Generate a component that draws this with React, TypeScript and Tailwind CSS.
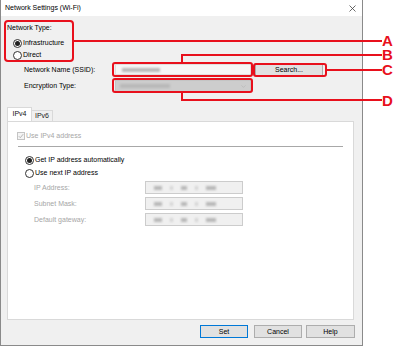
import { ChevronDown } from "lucide-react";

const font = { fontFamily: '"Liberation Sans", Arial, sans-serif' };

function Radio({ checked, disabled }: { checked?: boolean; disabled?: boolean }) {
  return (
    <span
      className={`flex h-[9px] w-[9px] shrink-0 items-center justify-center rounded-full border bg-white ${
        disabled ? "border-[#bcbcbc]" : "border-[#333]"
      }`}
    >
      {checked && <span className="h-[5px] w-[5px] rounded-full bg-[#222]" />}
    </span>
  );
}

/** blurred placeholder for a masked value */
function Smudge({ w, className = "" }: { w: number; className?: string }) {
  return <span className={`block h-[4px] bg-[#b8b8b8] blur-[1px] ${className}`} style={{ width: w }} />;
}

function IpField({ label }: { label: string }) {
  return (
    <div className="mt-[3px] flex h-[13px] items-center pl-[26px]">
      <span className="w-[111px] text-[#a6a6a6]">{label}</span>
      <div className="flex h-[13px] w-[98px] items-center gap-[8px] border border-[#cccccc] bg-[#f0f0f0] pl-[8px]">
        <Smudge w={8} />
        <Smudge w={3} className="bg-[#d4d4d4]" />
        <Smudge w={6} />
        <Smudge w={3} className="bg-[#d4d4d4]" />
        <Smudge w={10} />
      </div>
    </div>
  );
}

function Btn({ label, focused, className = "" }: { label: string; focused?: boolean; className?: string }) {
  return (
    <div
      className={`flex h-[13px] items-center justify-center border bg-[#e1e1e1] ${
        focused ? "border-[#0078d7]" : "border-[#adadad]"
      } ${className}`}
    >
      {label}
    </div>
  );
}

function Dialog() {
  return (
    <div className="flex h-[346px] w-[363px] flex-col border-x border-b border-[#8a8a8a] bg-[#f0f0f0] text-[7px] leading-[10px] text-black">
      <div className="flex h-[16px] items-center justify-between bg-white pl-[4px] pr-[6px]">
        <span>Network Settings (Wi-Fi)</span>
        <svg width="7" height="7" viewBox="0 0 7 7" className="text-[#444]">
          <path d="M0.5 0.5L6.5 6.5M6.5 0.5L0.5 6.5" stroke="currentColor" strokeWidth="0.8" />
        </svg>
      </div>

      <div className="mt-[7px] h-[10px] pl-[6px]">Network Type:</div>
      <div className="mt-[5px] flex h-[10px] items-center gap-[1px] pl-[12px]">
        <Radio checked />
        <span>Infrastructure</span>
      </div>
      <div className="mt-[2px] flex h-[10px] items-center gap-[1px] pl-[12px]">
        <Radio />
        <span>Direct</span>
      </div>

      <div className="mt-[3px] flex h-[13px] items-center pl-[23px]">
        <span className="w-[91px]">Network Name (SSID):</span>
        <div className="flex h-[11px] w-[136px] items-center border border-[#e0e0e0] bg-[#f6f6f6] pl-[6px]">
          <Smudge w={38} className="bg-[#a8a8a8]" />
        </div>
        <Btn label="Search..." className="ml-[4px] h-[10px] w-[68px]" />
      </div>
      <div className="mt-[4px] flex h-[12px] items-center pl-[23px]">
        <span className="w-[91px]">Encryption Type:</span>
        <div className="flex h-[12px] w-[136px] items-center justify-between border border-[#c4c4c4] bg-[#cdcdcd] pl-[4px] pr-[3px]">
          <Smudge w={50} className="bg-[#b4b4b4]" />
          <ChevronDown size={7} strokeWidth={1.2} className="text-[#a0a0a0]" />
        </div>
      </div>

      <div className="mt-[16px] flex h-[13px] items-end pl-[6px]">
        <div className="relative z-10 flex h-[14px] w-[25px] items-start justify-center border-x border-t border-[#d9d9d9] bg-white pt-[1px] text-[#111]">
          IPv4
        </div>
        <div className="flex h-[11px] w-[21px] items-center justify-center border-r border-t border-[#d9d9d9] bg-[#f0f0f0] text-[#222]">
          IPv6
        </div>
      </div>
      <div className="ml-[6px] flex h-[199px] w-[347px] flex-col border border-[#d9d9d9] bg-white">
        <div className="mt-[9px] flex h-[10px] items-center gap-[1px] pl-[9px] text-[#a6a6a6]">
          <span className="flex h-[8px] w-[8px] items-center justify-center border border-[#c4c4c4] bg-[#f4f4f4]">
            <svg width="6" height="6" viewBox="0 0 6 6">
              <path d="M0.8 3.2L2.3 4.7L5.2 1.2" fill="none" stroke="#b0b0b0" strokeWidth="0.9" />
            </svg>
          </span>
          <span>Use IPv4 address</span>
        </div>
        <div className="ml-[10px] mt-[5px] h-px w-[325px] bg-[#a8a8a8]" />
        <div className="mt-[8px] flex h-[10px] items-center gap-[1px] pl-[17px]">
          <Radio checked />
          <span>Get IP address automatically</span>
        </div>
        <div className="mt-[3px] flex h-[10px] items-center gap-[1px] pl-[17px]">
          <Radio />
          <span>Use next IP address</span>
        </div>
        <IpField label="IP Address:" />
        <IpField label="Subnet Mask:" />
        <IpField label="Default gateway:" />
      </div>

      <div className="mt-[5px] flex h-[13px] pl-[199px]">
        <Btn label="Set" focused className="w-[48px]" />
        <Btn label="Cancel" className="ml-[6px] w-[48px]" />
        <Btn label="Help" className="ml-[4px] w-[49px]" />
      </div>
    </div>
  );
}

function Callouts() {
  const red = "border-[#e8101c]";
  return (
    <>
      {/* A */}
      <div className={`absolute left-[4px] top-[20px] h-[42px] w-[70px] rounded-[4px] border-2 ${red}`} />
      <div className="absolute left-[73px] top-[40px] h-[2px] w-[309px] bg-[#e8101c]" />
      {/* B */}
      <div className={`absolute left-[112px] top-[62px] h-[15px] w-[141px] rounded-[3px] border-2 ${red}`} />
      <div className="absolute left-[181px] top-[54px] h-[9px] w-[2px] bg-[#e8101c]" />
      <div className="absolute left-[181px] top-[54px] h-[2px] w-[201px] bg-[#e8101c]" />
      {/* C */}
      <div className={`absolute left-[253px] top-[63px] h-[14px] w-[74px] rounded-[3px] border-2 ${red}`} />
      <div className="absolute left-[326px] top-[69px] h-[2px] w-[56px] bg-[#e8101c]" />
      {/* D */}
      <div className={`absolute left-[112px] top-[78px] h-[15px] w-[141px] rounded-[3px] border-2 ${red}`} />
      <div className="absolute left-[181px] top-[92px] h-[9px] w-[2px] bg-[#e8101c]" />
      <div className="absolute left-[181px] top-[99px] h-[2px] w-[201px] bg-[#e8101c]" />

      {[
        ["A", "top-[35px]"],
        ["B", "top-[49px]"],
        ["C", "top-[64px]"],
        ["D", "top-[95px]"],
      ].map(([l, top]) => (
        <span
          key={l}
          className={`absolute left-[382px] ${top} h-[12px] text-[15px] font-bold leading-[12px] text-[#e8101c]`}
        >
          {l}
        </span>
      ))}
    </>
  );
}

export default function App() {
  return (
    <div className="relative h-[346px] w-[396px] overflow-hidden bg-white" style={font}>
      <Dialog />
      <Callouts />
    </div>
  );
}
